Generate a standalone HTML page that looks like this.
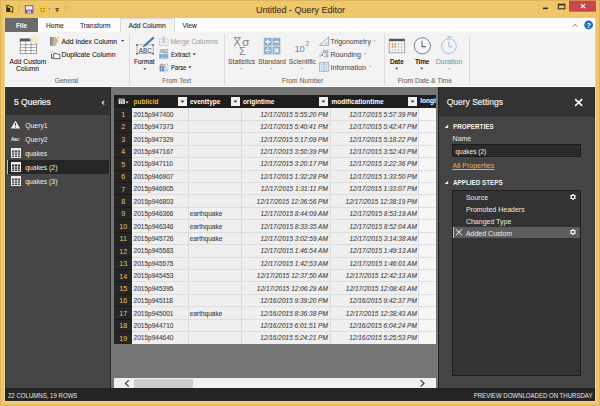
<!DOCTYPE html>
<html><head><meta charset="utf-8"><style>
html,body{margin:0;padding:0;}
body{width:600px;height:406px;position:relative;overflow:hidden;background:#EFC76A;font-family:"Liberation Sans", sans-serif;}
svg{overflow:visible}
</style></head><body>
<div style="position:absolute;left:0px;top:0px;width:600px;height:406px;border:1px solid #dcb55c;box-sizing:border-box"></div>
<div style="position:absolute;top:6.00px;font-size:9px;line-height:9px;color:#3d3522;white-space:nowrap;-webkit-text-stroke:0.1px #3d3522;left:256px;">Untitled - Query Editor</div>
<svg style="position:absolute;left:0;top:0" width="600" height="18">
<g>
<rect x="4.8" y="3.8" width="9.6" height="9.6" rx="2" fill="#f4d35a" opacity="0.7"/>
<path d="M6.2 5.6 L8.6 5.1 L9.6 6.4 L12.8 6.9 V12.3 L10.2 11.6 Z" fill="none" stroke="#2e2810" stroke-width="0.9"/>
<path d="M6.2 7.3 L10.2 8 V12 L6.2 12 Z" fill="#2e2810"/>
<rect x="18.5" y="5" width="0.8" height="7.5" fill="#d2ad55"/>
<rect x="25.4" y="5.7" width="7.4" height="7.3" fill="#f3ecf5" stroke="#7b5b8e" stroke-width="1"/>
<rect x="25.4" y="9.6" width="7.4" height="3.4" fill="#7b5b8e"/>
<rect x="27.6" y="10.6" width="3" height="2.4" fill="#f3ecf5"/>
<rect x="28.6" y="11.3" width="1" height="1" fill="#5a3a6a"/>
<circle cx="42.6" cy="9.9" r="3.9" fill="#f3d060" stroke="#f5c800" stroke-width="0.8"/>
<circle cx="41.1" cy="8.4" r="0.65" fill="#6a5500"/>
<circle cx="44.1" cy="8.4" r="0.65" fill="#6a5500"/>
<path d="M40.2 10.4 Q42.6 13.2 45 10.4" stroke="#6a5500" stroke-width="0.75" fill="none"/>
<path d="M48.3 8.2 L50.8 8.2 L49.55 9.4 Z" fill="#8a7a50"/>
<rect x="55.4" y="8.1" width="3.6" height="0.8" fill="#2a2410"/>
<path d="M55.4 9.8 L59 9.8 L57.2 11.7 Z" fill="#2a2410"/>
<rect x="65" y="5" width="0.8" height="7.5" fill="#d2ad55"/>
<rect x="542.8" y="7.6" width="5.2" height="1.5" fill="#2a2410"/>
<rect x="558.3" y="4.2" width="6.6" height="4.6" fill="none" stroke="#2a2410" stroke-width="1"/>
<rect x="558.3" y="4.2" width="6.6" height="1.2" fill="#2a2410"/>
<rect x="569" y="0.6" width="27" height="11.1" fill="#C9474C"/>
<path d="M581 4.2 L585 8.2 M585 4.2 L581 8.2" stroke="#fff" stroke-width="1.2"/>
</g></svg>
<div style="position:absolute;left:4px;top:17.5px;width:1px;height:383.5px;background:#f3d48a"></div>
<div style="position:absolute;left:595px;top:17.5px;width:1px;height:383.5px;background:#f3d48a"></div>
<div style="position:absolute;left:4px;top:401px;width:592px;height:1px;background:#f3d48a"></div>
<div style="position:absolute;left:5px;top:17.5px;width:590px;height:14.5px;background:#ffffff"></div>
<div style="position:absolute;left:5px;top:31.6px;width:590px;height:0.8px;background:#d8d8d8"></div>
<div style="position:absolute;left:5px;top:17.8px;width:33px;height:14.2px;background:#6b6b6b"></div>
<div style="position:absolute;top:23.00px;font-size:6.5px;line-height:6.5px;color:#ffffff;white-space:nowrap;font-weight:bold;left:-28.5px;width:100px;text-align:center;">File</div>
<div style="position:absolute;top:23.00px;font-size:6.6px;line-height:6.6px;color:#2e2e2e;white-space:nowrap;-webkit-text-stroke:0.1px #2e2e2e;left:46px;">Home</div>
<div style="position:absolute;top:23.00px;font-size:6.75px;line-height:6.75px;color:#2e2e2e;white-space:nowrap;-webkit-text-stroke:0.1px #2e2e2e;left:80px;">Transform</div>
<div style="position:absolute;left:120px;top:17.8px;width:54.5px;height:15px;background:#f3f3f3;border-left:0.8px solid #d8d8d8;border-right:0.8px solid #d8d8d8;border-top:0.8px solid #d8d8d8;box-sizing:border-box"></div>
<div style="position:absolute;top:23.00px;font-size:6.75px;line-height:6.75px;color:#2e2e2e;white-space:nowrap;-webkit-text-stroke:0.1px #2e2e2e;left:128.5px;">Add Column</div>
<div style="position:absolute;top:23.00px;font-size:6.7px;line-height:6.7px;color:#2e2e2e;white-space:nowrap;-webkit-text-stroke:0.1px #2e2e2e;left:182.5px;">View</div>
<svg style="position:absolute;left:560px;top:17px" width="40" height="16">
<path d="M12.8 9.6 L15 7.4 L17.2 9.6" stroke="#6b6b6b" stroke-width="1" fill="none"/>
<circle cx="28.6" cy="8" r="4.4" fill="#1f6fb5"/>
<text x="28.6" y="10.8" font-family="Liberation Sans" font-weight="bold" font-size="7.2" fill="#fff" text-anchor="middle">?</text>
</svg>
<div style="position:absolute;left:5px;top:32.3px;width:590px;height:53.5px;background:#f3f3f3"></div>
<div style="position:absolute;left:5px;top:85.5px;width:590px;height:1.5px;background:#fdfdfd"></div>
<div style="position:absolute;left:128.8px;top:34px;width:0.8px;height:51px;background:#dcdcdc"></div>
<div style="position:absolute;left:224px;top:34px;width:0.8px;height:51px;background:#dcdcdc"></div>
<div style="position:absolute;left:383.5px;top:34px;width:0.8px;height:51px;background:#dcdcdc"></div>
<div style="position:absolute;left:469px;top:34px;width:0.8px;height:51px;background:#dcdcdc"></div>
<div style="position:absolute;top:59.00px;font-size:6.7px;line-height:6.7px;color:#262626;white-space:nowrap;-webkit-text-stroke:0.1px #262626;left:9.6px;">Add Custom</div>
<div style="position:absolute;top:66.00px;font-size:6.7px;line-height:6.7px;color:#262626;white-space:nowrap;-webkit-text-stroke:0.1px #262626;left:16px;">Column</div>
<div style="position:absolute;top:39.00px;font-size:6.75px;line-height:6.75px;color:#262626;white-space:nowrap;-webkit-text-stroke:0.1px #262626;left:61.5px;">Add Index Column</div>
<div style="position:absolute;top:52.00px;font-size:6.85px;line-height:6.85px;color:#262626;white-space:nowrap;-webkit-text-stroke:0.1px #262626;left:61.5px;">Duplicate Column</div>
<div style="position:absolute;top:78.00px;font-size:6.6px;line-height:6.6px;color:#707070;white-space:nowrap;-webkit-text-stroke:0.1px #707070;left:16.5px;width:100px;text-align:center;">General</div>
<div style="position:absolute;top:59.00px;font-size:6.5px;line-height:6.5px;color:#262626;white-space:nowrap;-webkit-text-stroke:0.1px #262626;left:134px;">Format</div>
<div style="position:absolute;top:39.00px;font-size:6.75px;line-height:6.75px;color:#9a9a9a;white-space:nowrap;left:170.4px;">Merge Columns</div>
<div style="position:absolute;top:52.00px;font-size:6.6px;line-height:6.6px;color:#262626;white-space:nowrap;-webkit-text-stroke:0.1px #262626;left:170.6px;transform:scaleX(0.93);transform-origin:0 0;">Extract</div>
<div style="position:absolute;top:65.00px;font-size:6.6px;line-height:6.6px;color:#262626;white-space:nowrap;-webkit-text-stroke:0.1px #262626;left:170.6px;transform:scaleX(0.89);transform-origin:0 0;">Parse</div>
<div style="position:absolute;top:78.00px;font-size:6.5px;line-height:6.5px;color:#707070;white-space:nowrap;-webkit-text-stroke:0.1px #707070;left:126.69999999999999px;width:100px;text-align:center;">From Text</div>
<div style="position:absolute;top:59.00px;font-size:6.8px;line-height:6.8px;color:#505050;white-space:nowrap;-webkit-text-stroke:0.05px #505050;left:228px;">Statistics</div>
<div style="position:absolute;top:59.00px;font-size:6.9px;line-height:6.9px;color:#505050;white-space:nowrap;-webkit-text-stroke:0.05px #505050;left:257.9px;">Standard</div>
<div style="position:absolute;top:59.00px;font-size:6.8px;line-height:6.8px;color:#505050;white-space:nowrap;-webkit-text-stroke:0.05px #505050;left:288.8px;">Scientific</div>
<div style="position:absolute;top:39.00px;font-size:6.9px;line-height:6.9px;color:#4a4a4a;white-space:nowrap;-webkit-text-stroke:0.05px #4a4a4a;left:330.5px;">Trigonometry</div>
<div style="position:absolute;top:52.00px;font-size:7.1px;line-height:7.1px;color:#4a4a4a;white-space:nowrap;-webkit-text-stroke:0.05px #4a4a4a;left:330.5px;">Rounding</div>
<div style="position:absolute;top:65.00px;font-size:7.1px;line-height:7.1px;color:#4a4a4a;white-space:nowrap;-webkit-text-stroke:0.05px #4a4a4a;left:330.5px;">Information</div>
<div style="position:absolute;top:78.00px;font-size:6.7px;line-height:6.7px;color:#707070;white-space:nowrap;-webkit-text-stroke:0.1px #707070;left:252.7px;width:100px;text-align:center;">From Number</div>
<div style="position:absolute;top:59.00px;font-size:6.5px;line-height:6.5px;color:#222;white-space:nowrap;font-weight:bold;left:390px;letter-spacing:-0.1px;">Date</div>
<div style="position:absolute;top:59.00px;font-size:6.5px;line-height:6.5px;color:#222;white-space:nowrap;font-weight:bold;left:415px;letter-spacing:-0.25px;">Time</div>
<div style="position:absolute;top:59.00px;font-size:7.1px;line-height:7.1px;color:#8c8c8c;white-space:nowrap;-webkit-text-stroke:0.05px #8c8c8c;left:435.7px;">Duration</div>
<div style="position:absolute;top:78.00px;font-size:6.7px;line-height:6.7px;color:#707070;white-space:nowrap;-webkit-text-stroke:0.1px #707070;left:374.8px;width:100px;text-align:center;">From Date &amp; Time</div>
<svg style="position:absolute;left:0;top:32px" width="600" height="54">
<g transform="translate(0,-32)">
<!-- add custom column icon -->
<rect x="20.2" y="39" width="16.5" height="14.7" fill="#fff" stroke="#7a7a7a" stroke-width="0.7"/>
<rect x="19.9" y="38.7" width="10.8" height="2.7" fill="#595959"/>
<path d="M20 44.7 H36.8 M20 47.6 H36.8 M20 50.6 H36.8 M25.6 41.4 V53.9 M31.1 41.4 V53.9" stroke="#7a7a7a" stroke-width="0.65"/>
<circle cx="34.4" cy="39.9" r="3.6" fill="#f3f3f3"/>
<g stroke="#eadb9c" stroke-width="0.75"><path d="M34.4 35 V44.8 M29.5 39.9 H39.3 M30.9 36.4 L37.9 43.4 M37.9 36.4 L30.9 43.4"/></g>
<circle cx="34.4" cy="39.9" r="2" fill="#fbf5d8" stroke="#e8d78e" stroke-width="0.5"/>
<!-- add index icon -->
<defs><linearGradient id="gi" x1="0" x2="1"><stop offset="0" stop-color="#7d7d7d"/><stop offset="1" stop-color="#d0d0d0"/></linearGradient></defs>
<rect x="50" y="37" width="6.5" height="8.8" fill="url(#gi)"/>
<path d="M58.8 36.8 L54.6 41.6 L56.8 41.8 L53.8 46 L59 40.6 L56.9 40.4 L59.6 36.8 Z" fill="#eeae3c"/>
<!-- duplicate icon -->
<path d="M51.8 50.5 L52.5 52 L51.8 53.3 L51.1 52 Z" fill="#d9d08a"/>
<circle cx="51.8" cy="51.9" r="1.1" fill="#e0d890"/>
<path d="M51.6 54 V58.2 H53.5" stroke="#3a3a3a" stroke-width="0.9" fill="none"/>
<path d="M53.8 53.4 H56.6 L57.3 54.3 H59.8 V58.7 H53.8 Z" fill="#fff" stroke="#3a3a3a" stroke-width="0.8"/>
<!-- format icon -->
<rect x="137" y="44.9" width="16.1" height="8.8" fill="none" stroke="#8a8a8a" stroke-width="0.6"/>
<g fill="#3a3a3a"><rect x="136.3" y="44.2" width="1.4" height="1.4"/><rect x="152.4" y="44.2" width="1.4" height="1.4"/><rect x="136.3" y="53" width="1.4" height="1.4"/><rect x="152.4" y="53" width="1.4" height="1.4"/></g>
<text x="145.3" y="52.6" font-family="Liberation Sans" font-size="7.4" fill="#3a3a3a" text-anchor="middle" textLength="13" lengthAdjust="spacingAndGlyphs">ABC</text>
<path d="M153.8 37.4 L144.6 45.6" stroke="#4d7db5" stroke-width="2.1"/>
<path d="M144.6 45.6 L143.4 46.7" stroke="#2a2a2a" stroke-width="1.1"/>
<!-- merge columns icon (disabled) -->
<rect x="159.3" y="39.2" width="8.8" height="6.1" fill="#f0f3f7" stroke="#bcc6d2" stroke-width="0.7"/>
<rect x="162.3" y="36.4" width="2.6" height="6" fill="#c4cedb"/>
<path d="M161.2 42.4 H166.2" stroke="#c4cedb" stroke-width="1"/>
<!-- extract icon -->
<text x="163.7" y="53" font-family="Liberation Sans" font-size="4.6" fill="#6a6a6a" text-anchor="middle" textLength="8.6" lengthAdjust="spacingAndGlyphs">ABC</text>
<path d="M165.6 53.2 L168 49.5" stroke="#6a6a6a" stroke-width="0.5"/>
<rect x="159.2" y="53.8" width="9" height="4.8" fill="#6f9dd1"/>
<rect x="159.9" y="54.6" width="7.6" height="3.2" fill="none" stroke="#fff" stroke-width="0.45" stroke-dasharray="0.7 0.5"/>
<path d="M162.5 54.6 V57.8 M165 54.6 V57.8" stroke="#fff" stroke-width="0.45"/>
<!-- parse icon -->
<text x="162.8" y="66.6" font-family="Liberation Sans" font-size="4.8" fill="#6a6a6a" text-anchor="middle" textLength="6.6" lengthAdjust="spacingAndGlyphs">abc</text>
<path d="M166.5 63.2 L168.2 65.6" stroke="#6a6a6a" stroke-width="0.5"/>
<rect x="159.6" y="66.8" width="4.4" height="4.6" fill="#4f82bd"/>
<rect x="164" y="67.6" width="4.2" height="3.8" fill="#a8c4e4"/>
<path d="M159.6 69.1 H168.2 M161.8 66.8 V71.4 M166.1 67.6 V71.4" stroke="#fff" stroke-width="0.4"/>
<!-- statistics icon -->
<g fill="#74849a" font-family="Liberation Sans">
<text x="233.4" y="45.9" font-size="10.6" textLength="7.4" lengthAdjust="spacingAndGlyphs">X</text>
<text x="242" y="45.9" font-size="11" textLength="7.4" lengthAdjust="spacingAndGlyphs">σ</text>
<text x="239" y="54.6" font-size="10" textLength="6.8" lengthAdjust="spacingAndGlyphs">Σ</text>
</g>
<rect x="233.8" y="37" width="7" height="0.8" fill="#74849a"/>
<!-- standard icon -->
<g fill="#94aecf">
<rect x="263.8" y="37.8" width="7.9" height="7.9"/><rect x="272.5" y="37.8" width="7.9" height="7.9"/>
<rect x="263.8" y="46.5" width="7.9" height="7.9"/><rect x="272.5" y="46.5" width="7.9" height="7.9"/>
</g>
<g stroke="#fff" stroke-width="1.3">
<path d="M265.4 41.75 H270.1 M267.75 39.4 V44.1 M274.2 41.75 H278.8 M265.4 50.45 H270.1 M274.6 48.5 L278.4 52.3 M278.4 48.5 L274.6 52.3"/>
</g>
<g fill="#fff"><circle cx="267.75" cy="48.3" r="0.75"/><circle cx="267.75" cy="52.6" r="0.75"/></g>
<!-- scientific -->
<text x="294.4" y="51.5" font-family="Liberation Sans" font-size="9.4" fill="#74849a" textLength="10.4" lengthAdjust="spacingAndGlyphs">10</text>
<text x="305.6" y="45.6" font-family="Liberation Sans" font-size="6.4" fill="#74849a">2</text>
<!-- trig -->
<path d="M319.5 45.3 L328.7 37 L328.7 45.3 Z" fill="#f4f6fa" stroke="#8a9ab0" stroke-width="0.8"/>
<path d="M325.8 45.3 V42.8 H328.7" stroke="#8a9ab0" stroke-width="0.6" fill="none"/>
<!-- rounding -->
<g fill="#5d6470">
<rect x="321.6" y="52.6" width="0.9" height="0.9"/>
<rect x="319.6" y="56.5" width="0.9" height="0.9"/>
<rect x="324.2" y="56.5" width="0.9" height="0.9"/>
</g>
<g fill="none" stroke="#5d6470" stroke-width="0.6">
<ellipse cx="324.3" cy="51.7" rx="1" ry="1.5"/>
<ellipse cx="327" cy="51.7" rx="1" ry="1.5"/>
<ellipse cx="327" cy="55.8" rx="1" ry="1.5"/>
<path d="M319.3 55 H323 M322 54 L323 55 L322 56"/>
</g>
<!-- information -->
<rect x="319.6" y="62.5" width="9.1" height="8.8" fill="#dae6f2" stroke="#98aec6" stroke-width="0.8"/>
<path d="M324.1 62.5 V71.3" stroke="#98aec6" stroke-width="0.7"/>
<path d="M321 64.6 H322.8 M321 66.9 H322.8 M321 69.2 H322.8 M325.4 64.6 H327.3 M325.4 66.9 H327.3 M325.4 69.2 H327.3" stroke="#a9bcd2" stroke-width="0.7"/>
<!-- date icon -->
<rect x="389.2" y="39" width="15.5" height="13.8" fill="#fff" stroke="#888" stroke-width="0.7"/>
<rect x="389.2" y="39" width="15.5" height="2.2" fill="#555"/>
<path d="M389.2 44 H404.7 M389.2 47 H404.7 M389.2 50 H404.7 M392.3 41.2 V52.8 M395.4 41.2 V52.8 M398.5 41.2 V52.8 M401.6 41.2 V52.8" stroke="#b0b0b0" stroke-width="0.5"/>
<rect x="392.4" y="44.1" width="3" height="2.8" fill="none" stroke="#e89a48" stroke-width="0.8"/>
<!-- time icon -->
<circle cx="422.3" cy="45.8" r="8.1" fill="#f3f8fc" stroke="#6f6f6f" stroke-width="0.9"/>
<path d="M422 40.8 V46.6 H426" stroke="#6a6a6a" stroke-width="1.1" fill="none"/>
<!-- duration icon -->
<circle cx="449" cy="46.2" r="7.4" fill="#eef4fa" stroke="#aab8c8" stroke-width="0.9"/>
<path d="M447 36.6 H451 M449 36.6 V38.8" stroke="#aab8c8" stroke-width="0.9"/>
<path d="M448.8 41.6 V46.8 H452.4" stroke="#aab8c8" stroke-width="1" fill="none"/>
<!-- dropdown arrows -->
<g fill="#333">
<path d="M121 40.1 L124.2 40.1 L122.6 41.7 Z"/>
<path d="M143.3 68.3 L146.3 68.3 L144.8 69.8 Z"/>
<path d="M192.6 53.6 L195.9 53.6 L194.25 55.2 Z"/>
<path d="M188.3 66.6 L191.6 66.6 L189.95 68.2 Z"/>
<path d="M395.2 67.8 L398.2 67.8 L396.7 69.4 Z"/>
<path d="M420.2 67.8 L423.2 67.8 L421.7 69.4 Z"/>
</g>
<g fill="#a0a0a0">
<path d="M240 68 L242.4 68 L241.2 69.2 Z"/>
<path d="M270.3 68 L272.7 68 L271.5 69.2 Z"/>
<path d="M300.5 68 L302.9 68 L301.7 69.2 Z"/>
<path d="M373.4 40.6 L375.8 40.6 L374.6 41.8 Z"/>
<path d="M363.8 53.3 L366.2 53.3 L365 54.5 Z"/>
<path d="M369 65.7 L371.4 65.7 L370.2 66.9 Z"/>
<path d="M447.8 68 L450.2 68 L449 69.2 Z"/>
</g>
</g></svg>
<div style="position:absolute;left:5px;top:87px;width:105px;height:27.5px;background:#313131"></div>
<div style="position:absolute;left:5px;top:114.5px;width:105px;height:273.5px;background:#464646"></div>
<div style="position:absolute;left:110px;top:87px;width:1px;height:301px;background:#262626"></div>
<div style="position:absolute;top:98.00px;font-size:8.5px;line-height:8.5px;color:#f4f4f4;white-space:nowrap;-webkit-text-stroke:0.2px #f4f4f4;left:14px;">5 Queries</div>
<svg style="position:absolute;left:0;top:87px" width="111" height="120">
<g transform="translate(0,-87)">
<path d="M104.2 101 L102.2 102.8 L104.2 104.6" stroke="#e8e8e8" stroke-width="1.1" fill="none"/>
<path d="M15.5 120.8 L20.2 128.5 H10.8 Z" fill="#f2f2f2"/>
<rect x="15.1" y="123" width="0.9" height="3" fill="#333"/>
<rect x="15.1" y="126.8" width="0.9" height="0.9" fill="#333"/>
<text x="11" y="140.8" font-family="Liberation Sans" font-weight="bold" font-size="4.5" fill="#eee">A</text>
<text x="14.2" y="140.8" font-family="Liberation Sans" font-weight="bold" font-size="3.8" fill="#eee">BC</text>
</g></svg>
<div style="position:absolute;left:7px;top:160.3px;width:101.5px;height:13.3px;background:#262626"></div>
<div style="position:absolute;left:7px;top:160.3px;width:0.9px;height:13.3px;background:#e9bd5a"></div>
<svg style="position:absolute;left:10.5px;top:148px" width="10" height="10"><rect x="0.5" y="0.5" width="9" height="9" fill="none" stroke="#eee" stroke-width="1"/><rect x="0.5" y="0.5" width="9" height="2" fill="#eee"/><path d="M3.5 2.5 V9.5 M6.5 2.5 V9.5 M0.5 5 H9.5 M0.5 7.3 H9.5" stroke="#eee" stroke-width="0.8"/></svg>
<svg style="position:absolute;left:10.5px;top:162px" width="10" height="10"><rect x="0.5" y="0.5" width="9" height="9" fill="none" stroke="#eee" stroke-width="1"/><rect x="0.5" y="0.5" width="9" height="2" fill="#eee"/><path d="M3.5 2.5 V9.5 M6.5 2.5 V9.5 M0.5 5 H9.5 M0.5 7.3 H9.5" stroke="#eee" stroke-width="0.8"/></svg>
<svg style="position:absolute;left:10.5px;top:176.2px" width="10" height="10"><rect x="0.5" y="0.5" width="9" height="9" fill="none" stroke="#eee" stroke-width="1"/><rect x="0.5" y="0.5" width="9" height="2" fill="#eee"/><path d="M3.5 2.5 V9.5 M6.5 2.5 V9.5 M0.5 5 H9.5 M0.5 7.3 H9.5" stroke="#eee" stroke-width="0.8"/></svg>
<div style="position:absolute;top:123.00px;font-size:6.8px;line-height:6.8px;color:#efefef;white-space:nowrap;left:25.3px;">Query1</div>
<div style="position:absolute;top:137.00px;font-size:6.8px;line-height:6.8px;color:#efefef;white-space:nowrap;left:25.3px;">Query2</div>
<div style="position:absolute;top:151.00px;font-size:6.8px;line-height:6.8px;color:#efefef;white-space:nowrap;left:25.3px;">quakes</div>
<div style="position:absolute;top:165.00px;font-size:6.8px;line-height:6.8px;color:#efefef;white-space:nowrap;left:25.3px;">quakes (2)</div>
<div style="position:absolute;top:179.00px;font-size:6.8px;line-height:6.8px;color:#efefef;white-space:nowrap;left:25.3px;">quakes (3)</div>
<div style="position:absolute;left:5px;top:87px;width:1px;height:301px;background:#3c3c36"></div>
<div style="position:absolute;left:111px;top:87px;width:327px;height:301px;background:#757575"></div>
<div style="position:absolute;left:114px;top:95.3px;width:322px;height:12.5px;background:#1e1e1e"></div>
<div style="position:absolute;left:114px;top:107.8px;width:18px;height:236.16999999999996px;background:#262626"></div>
<div style="position:absolute;left:132px;top:107.8px;width:304px;height:236.16999999999996px;background:#efefef"></div>
<div style="position:absolute;left:418.6px;top:107.8px;width:17.399999999999977px;height:236.16999999999996px;background:#f6f6f6"></div>
<div style="position:absolute;left:114px;top:119.82999999999998px;width:18px;height:0.8px;background:#1a1a1a"></div>
<div style="position:absolute;left:132px;top:119.82999999999998px;width:304px;height:0.8px;background:#dedede"></div>
<div style="position:absolute;left:114px;top:132.26px;width:18px;height:0.8px;background:#1a1a1a"></div>
<div style="position:absolute;left:132px;top:132.26px;width:304px;height:0.8px;background:#dedede"></div>
<div style="position:absolute;left:114px;top:144.69px;width:18px;height:0.8px;background:#1a1a1a"></div>
<div style="position:absolute;left:132px;top:144.69px;width:304px;height:0.8px;background:#dedede"></div>
<div style="position:absolute;left:114px;top:157.11999999999998px;width:18px;height:0.8px;background:#1a1a1a"></div>
<div style="position:absolute;left:132px;top:157.11999999999998px;width:304px;height:0.8px;background:#dedede"></div>
<div style="position:absolute;left:114px;top:169.54999999999998px;width:18px;height:0.8px;background:#1a1a1a"></div>
<div style="position:absolute;left:132px;top:169.54999999999998px;width:304px;height:0.8px;background:#dedede"></div>
<div style="position:absolute;left:114px;top:181.98px;width:18px;height:0.8px;background:#1a1a1a"></div>
<div style="position:absolute;left:132px;top:181.98px;width:304px;height:0.8px;background:#dedede"></div>
<div style="position:absolute;left:114px;top:194.41px;width:18px;height:0.8px;background:#1a1a1a"></div>
<div style="position:absolute;left:132px;top:194.41px;width:304px;height:0.8px;background:#dedede"></div>
<div style="position:absolute;left:114px;top:206.84px;width:18px;height:0.8px;background:#1a1a1a"></div>
<div style="position:absolute;left:132px;top:206.84px;width:304px;height:0.8px;background:#dedede"></div>
<div style="position:absolute;left:114px;top:219.27px;width:18px;height:0.8px;background:#1a1a1a"></div>
<div style="position:absolute;left:132px;top:219.27px;width:304px;height:0.8px;background:#dedede"></div>
<div style="position:absolute;left:114px;top:231.7px;width:18px;height:0.8px;background:#1a1a1a"></div>
<div style="position:absolute;left:132px;top:231.7px;width:304px;height:0.8px;background:#dedede"></div>
<div style="position:absolute;left:114px;top:244.12999999999997px;width:18px;height:0.8px;background:#1a1a1a"></div>
<div style="position:absolute;left:132px;top:244.12999999999997px;width:304px;height:0.8px;background:#dedede"></div>
<div style="position:absolute;left:114px;top:256.56px;width:18px;height:0.8px;background:#1a1a1a"></div>
<div style="position:absolute;left:132px;top:256.56px;width:304px;height:0.8px;background:#dedede"></div>
<div style="position:absolute;left:114px;top:268.99px;width:18px;height:0.8px;background:#1a1a1a"></div>
<div style="position:absolute;left:132px;top:268.99px;width:304px;height:0.8px;background:#dedede"></div>
<div style="position:absolute;left:114px;top:281.42px;width:18px;height:0.8px;background:#1a1a1a"></div>
<div style="position:absolute;left:132px;top:281.42px;width:304px;height:0.8px;background:#dedede"></div>
<div style="position:absolute;left:114px;top:293.85px;width:18px;height:0.8px;background:#1a1a1a"></div>
<div style="position:absolute;left:132px;top:293.85px;width:304px;height:0.8px;background:#dedede"></div>
<div style="position:absolute;left:114px;top:306.28000000000003px;width:18px;height:0.8px;background:#1a1a1a"></div>
<div style="position:absolute;left:132px;top:306.28000000000003px;width:304px;height:0.8px;background:#dedede"></div>
<div style="position:absolute;left:114px;top:318.71000000000004px;width:18px;height:0.8px;background:#1a1a1a"></div>
<div style="position:absolute;left:132px;top:318.71000000000004px;width:304px;height:0.8px;background:#dedede"></div>
<div style="position:absolute;left:114px;top:331.14000000000004px;width:18px;height:0.8px;background:#1a1a1a"></div>
<div style="position:absolute;left:132px;top:331.14000000000004px;width:304px;height:0.8px;background:#dedede"></div>
<div style="position:absolute;left:188.0px;top:107.8px;width:0.8px;height:236.16999999999996px;background:#dcdcdc"></div>
<div style="position:absolute;left:240.9px;top:107.8px;width:0.8px;height:236.16999999999996px;background:#dcdcdc"></div>
<div style="position:absolute;left:329.6px;top:107.8px;width:0.8px;height:236.16999999999996px;background:#dcdcdc"></div>
<div style="position:absolute;left:418.20000000000005px;top:107.8px;width:0.8px;height:236.16999999999996px;background:#dcdcdc"></div>
<svg style="position:absolute;left:114px;top:95px" width="24" height="13">
<rect x="4.6" y="3.6" width="6.3" height="5.4" fill="#dcdcdc"/>
<rect x="4.6" y="3.4" width="6.3" height="1" fill="#4a6a6a"/>
<path d="M6.7 4.4 V9 M8.8 4.4 V9" stroke="#1e1e1e" stroke-width="0.5"/>
<path d="M11.4 6.4 L14.6 6.4 L13 8.4 Z" fill="#f0f0f0"/>
</svg>
<div style="position:absolute;top:99.00px;font-size:6.5px;line-height:6.5px;color:#e8b94c;white-space:nowrap;font-weight:bold;left:133.6px;">publicid</div>
<div style="position:absolute;left:177.70000000000002px;top:97px;width:9px;height:9px;background:#f2f2f2"></div>
<svg style="position:absolute;left:177.70000000000002px;top:97px" width="9" height="9"><path d="M2.3 3.5 L6.7 3.5 L4.5 6 Z" fill="#4a4a4a"/></svg>
<div style="position:absolute;top:99.00px;font-size:6.5px;line-height:6.5px;color:#ffffff;white-space:nowrap;font-weight:bold;left:190.0px;">eventtype</div>
<div style="position:absolute;left:230.60000000000002px;top:97px;width:9px;height:9px;background:#f2f2f2"></div>
<svg style="position:absolute;left:230.60000000000002px;top:97px" width="9" height="9"><path d="M2.3 3.5 L6.7 3.5 L4.5 6 Z" fill="#4a4a4a"/></svg>
<div style="position:absolute;top:99.00px;font-size:6.5px;line-height:6.5px;color:#ffffff;white-space:nowrap;font-weight:bold;left:242.9px;">origintime</div>
<div style="position:absolute;left:319.3px;top:97px;width:9px;height:9px;background:#f2f2f2"></div>
<svg style="position:absolute;left:319.3px;top:97px" width="9" height="9"><path d="M2.3 3.5 L6.7 3.5 L4.5 6 Z" fill="#4a4a4a"/></svg>
<div style="position:absolute;top:99.00px;font-size:6.5px;line-height:6.5px;color:#ffffff;white-space:nowrap;font-weight:bold;left:331.6px;">modificationtime</div>
<div style="position:absolute;left:407.90000000000003px;top:97px;width:9px;height:9px;background:#f2f2f2"></div>
<svg style="position:absolute;left:407.90000000000003px;top:97px" width="9" height="9"><path d="M2.3 3.5 L6.7 3.5 L4.5 6 Z" fill="#4a4a4a"/></svg>
<div style="position:absolute;left:420.2px;top:95.3px;width:15.8px;height:12.5px;overflow:hidden">
<div style="position:absolute;left:0;top:3.20px;font-size:6.5px;line-height:6.5px;font-weight:bold;color:#fff;white-space:nowrap">longitude</div></div>
<div style="position:absolute;top:111.00px;font-size:7.2px;line-height:7.2px;color:#e2c27c;white-space:nowrap;left:73.3px;width:100px;text-align:center;">1</div>
<div style="position:absolute;top:112.00px;font-size:6.5px;line-height:6.5px;color:#444444;white-space:nowrap;-webkit-text-stroke:0.1px #444444;left:133.6px;">2015p947400</div>
<div style="position:absolute;top:112.00px;font-size:6.5px;line-height:6.5px;color:#444444;white-space:nowrap;-webkit-text-stroke:0.1px #444444;font-style:italic;right:272.2px;">12/17/2015 5:55:20 PM</div>
<div style="position:absolute;top:112.00px;font-size:6.5px;line-height:6.5px;color:#444444;white-space:nowrap;-webkit-text-stroke:0.1px #444444;font-style:italic;right:183.2px;">12/17/2015 5:57:39 PM</div>
<div style="position:absolute;top:123.00px;font-size:7.2px;line-height:7.2px;color:#e2c27c;white-space:nowrap;left:73.3px;width:100px;text-align:center;">2</div>
<div style="position:absolute;top:124.00px;font-size:6.5px;line-height:6.5px;color:#444444;white-space:nowrap;-webkit-text-stroke:0.1px #444444;left:133.6px;">2015p947373</div>
<div style="position:absolute;top:124.00px;font-size:6.5px;line-height:6.5px;color:#444444;white-space:nowrap;-webkit-text-stroke:0.1px #444444;font-style:italic;right:272.2px;">12/17/2015 5:40:41 PM</div>
<div style="position:absolute;top:124.00px;font-size:6.5px;line-height:6.5px;color:#444444;white-space:nowrap;-webkit-text-stroke:0.1px #444444;font-style:italic;right:183.2px;">12/17/2015 5:42:47 PM</div>
<div style="position:absolute;top:136.00px;font-size:7.2px;line-height:7.2px;color:#e2c27c;white-space:nowrap;left:73.3px;width:100px;text-align:center;">3</div>
<div style="position:absolute;top:137.00px;font-size:6.5px;line-height:6.5px;color:#444444;white-space:nowrap;-webkit-text-stroke:0.1px #444444;left:133.6px;">2015p947329</div>
<div style="position:absolute;top:137.00px;font-size:6.5px;line-height:6.5px;color:#444444;white-space:nowrap;-webkit-text-stroke:0.1px #444444;font-style:italic;right:272.2px;">12/17/2015 5:17:09 PM</div>
<div style="position:absolute;top:137.00px;font-size:6.5px;line-height:6.5px;color:#444444;white-space:nowrap;-webkit-text-stroke:0.1px #444444;font-style:italic;right:183.2px;">12/17/2015 5:18:22 PM</div>
<div style="position:absolute;top:148.00px;font-size:7.2px;line-height:7.2px;color:#e2c27c;white-space:nowrap;left:73.3px;width:100px;text-align:center;">4</div>
<div style="position:absolute;top:149.00px;font-size:6.5px;line-height:6.5px;color:#444444;white-space:nowrap;-webkit-text-stroke:0.1px #444444;left:133.6px;">2015p947167</div>
<div style="position:absolute;top:149.00px;font-size:6.5px;line-height:6.5px;color:#444444;white-space:nowrap;-webkit-text-stroke:0.1px #444444;font-style:italic;right:272.2px;">12/17/2015 3:50:39 PM</div>
<div style="position:absolute;top:149.00px;font-size:6.5px;line-height:6.5px;color:#444444;white-space:nowrap;-webkit-text-stroke:0.1px #444444;font-style:italic;right:183.2px;">12/17/2015 3:52:43 PM</div>
<div style="position:absolute;top:161.00px;font-size:7.2px;line-height:7.2px;color:#e2c27c;white-space:nowrap;left:73.3px;width:100px;text-align:center;">5</div>
<div style="position:absolute;top:161.00px;font-size:6.5px;line-height:6.5px;color:#444444;white-space:nowrap;-webkit-text-stroke:0.1px #444444;left:133.6px;">2015p947110</div>
<div style="position:absolute;top:161.00px;font-size:6.5px;line-height:6.5px;color:#444444;white-space:nowrap;-webkit-text-stroke:0.1px #444444;font-style:italic;right:272.2px;">12/17/2015 3:20:17 PM</div>
<div style="position:absolute;top:161.00px;font-size:6.5px;line-height:6.5px;color:#444444;white-space:nowrap;-webkit-text-stroke:0.1px #444444;font-style:italic;right:183.2px;">12/17/2015 3:22:36 PM</div>
<div style="position:absolute;top:173.00px;font-size:7.2px;line-height:7.2px;color:#e2c27c;white-space:nowrap;left:73.3px;width:100px;text-align:center;">6</div>
<div style="position:absolute;top:174.00px;font-size:6.5px;line-height:6.5px;color:#444444;white-space:nowrap;-webkit-text-stroke:0.1px #444444;left:133.6px;">2015p946907</div>
<div style="position:absolute;top:174.00px;font-size:6.5px;line-height:6.5px;color:#444444;white-space:nowrap;-webkit-text-stroke:0.1px #444444;font-style:italic;right:272.2px;">12/17/2015 1:32:28 PM</div>
<div style="position:absolute;top:174.00px;font-size:6.5px;line-height:6.5px;color:#444444;white-space:nowrap;-webkit-text-stroke:0.1px #444444;font-style:italic;right:183.2px;">12/17/2015 1:33:50 PM</div>
<div style="position:absolute;top:186.00px;font-size:7.2px;line-height:7.2px;color:#e2c27c;white-space:nowrap;left:73.3px;width:100px;text-align:center;">7</div>
<div style="position:absolute;top:186.00px;font-size:6.5px;line-height:6.5px;color:#444444;white-space:nowrap;-webkit-text-stroke:0.1px #444444;left:133.6px;">2015p946905</div>
<div style="position:absolute;top:186.00px;font-size:6.5px;line-height:6.5px;color:#444444;white-space:nowrap;-webkit-text-stroke:0.1px #444444;font-style:italic;right:272.2px;">12/17/2015 1:31:11 PM</div>
<div style="position:absolute;top:186.00px;font-size:6.5px;line-height:6.5px;color:#444444;white-space:nowrap;-webkit-text-stroke:0.1px #444444;font-style:italic;right:183.2px;">12/17/2015 1:33:07 PM</div>
<div style="position:absolute;top:198.00px;font-size:7.2px;line-height:7.2px;color:#e2c27c;white-space:nowrap;left:73.3px;width:100px;text-align:center;">8</div>
<div style="position:absolute;top:199.00px;font-size:6.5px;line-height:6.5px;color:#444444;white-space:nowrap;-webkit-text-stroke:0.1px #444444;left:133.6px;">2015p946803</div>
<div style="position:absolute;top:199.00px;font-size:6.5px;line-height:6.5px;color:#444444;white-space:nowrap;-webkit-text-stroke:0.1px #444444;font-style:italic;right:272.2px;">12/17/2015 12:36:56 PM</div>
<div style="position:absolute;top:199.00px;font-size:6.5px;line-height:6.5px;color:#444444;white-space:nowrap;-webkit-text-stroke:0.1px #444444;font-style:italic;right:183.2px;">12/17/2015 12:38:19 PM</div>
<div style="position:absolute;top:210.00px;font-size:7.2px;line-height:7.2px;color:#e2c27c;white-space:nowrap;left:73.3px;width:100px;text-align:center;">9</div>
<div style="position:absolute;top:211.00px;font-size:6.5px;line-height:6.5px;color:#444444;white-space:nowrap;-webkit-text-stroke:0.1px #444444;left:133.6px;">2015p946366</div>
<div style="position:absolute;top:211.00px;font-size:6.5px;line-height:6.5px;color:#444444;white-space:nowrap;-webkit-text-stroke:0.1px #444444;left:189.8px;">earthquake</div>
<div style="position:absolute;top:211.00px;font-size:6.5px;line-height:6.5px;color:#444444;white-space:nowrap;-webkit-text-stroke:0.1px #444444;font-style:italic;right:272.2px;">12/17/2015 8:44:09 AM</div>
<div style="position:absolute;top:211.00px;font-size:6.5px;line-height:6.5px;color:#444444;white-space:nowrap;-webkit-text-stroke:0.1px #444444;font-style:italic;right:183.2px;">12/17/2015 8:53:19 AM</div>
<div style="position:absolute;top:223.00px;font-size:7.2px;line-height:7.2px;color:#e2c27c;white-space:nowrap;left:73.3px;width:100px;text-align:center;">10</div>
<div style="position:absolute;top:224.00px;font-size:6.5px;line-height:6.5px;color:#444444;white-space:nowrap;-webkit-text-stroke:0.1px #444444;left:133.6px;">2015p946346</div>
<div style="position:absolute;top:224.00px;font-size:6.5px;line-height:6.5px;color:#444444;white-space:nowrap;-webkit-text-stroke:0.1px #444444;left:189.8px;">earthquake</div>
<div style="position:absolute;top:224.00px;font-size:6.5px;line-height:6.5px;color:#444444;white-space:nowrap;-webkit-text-stroke:0.1px #444444;font-style:italic;right:272.2px;">12/17/2015 8:33:35 AM</div>
<div style="position:absolute;top:224.00px;font-size:6.5px;line-height:6.5px;color:#444444;white-space:nowrap;-webkit-text-stroke:0.1px #444444;font-style:italic;right:183.2px;">12/17/2015 8:52:04 AM</div>
<div style="position:absolute;top:235.00px;font-size:7.2px;line-height:7.2px;color:#e2c27c;white-space:nowrap;left:73.3px;width:100px;text-align:center;">11</div>
<div style="position:absolute;top:236.00px;font-size:6.5px;line-height:6.5px;color:#444444;white-space:nowrap;-webkit-text-stroke:0.1px #444444;left:133.6px;">2015p945726</div>
<div style="position:absolute;top:236.00px;font-size:6.5px;line-height:6.5px;color:#444444;white-space:nowrap;-webkit-text-stroke:0.1px #444444;left:189.8px;">earthquake</div>
<div style="position:absolute;top:236.00px;font-size:6.5px;line-height:6.5px;color:#444444;white-space:nowrap;-webkit-text-stroke:0.1px #444444;font-style:italic;right:272.2px;">12/17/2015 3:02:59 AM</div>
<div style="position:absolute;top:236.00px;font-size:6.5px;line-height:6.5px;color:#444444;white-space:nowrap;-webkit-text-stroke:0.1px #444444;font-style:italic;right:183.2px;">12/17/2015 3:14:38 AM</div>
<div style="position:absolute;top:248.00px;font-size:7.2px;line-height:7.2px;color:#e2c27c;white-space:nowrap;left:73.3px;width:100px;text-align:center;">12</div>
<div style="position:absolute;top:248.00px;font-size:6.5px;line-height:6.5px;color:#444444;white-space:nowrap;-webkit-text-stroke:0.1px #444444;left:133.6px;">2015p945583</div>
<div style="position:absolute;top:248.00px;font-size:6.5px;line-height:6.5px;color:#444444;white-space:nowrap;-webkit-text-stroke:0.1px #444444;font-style:italic;right:272.2px;">12/17/2015 1:46:54 AM</div>
<div style="position:absolute;top:248.00px;font-size:6.5px;line-height:6.5px;color:#444444;white-space:nowrap;-webkit-text-stroke:0.1px #444444;font-style:italic;right:183.2px;">12/17/2015 1:49:13 AM</div>
<div style="position:absolute;top:260.00px;font-size:7.2px;line-height:7.2px;color:#e2c27c;white-space:nowrap;left:73.3px;width:100px;text-align:center;">13</div>
<div style="position:absolute;top:261.00px;font-size:6.5px;line-height:6.5px;color:#444444;white-space:nowrap;-webkit-text-stroke:0.1px #444444;left:133.6px;">2015p945575</div>
<div style="position:absolute;top:261.00px;font-size:6.5px;line-height:6.5px;color:#444444;white-space:nowrap;-webkit-text-stroke:0.1px #444444;font-style:italic;right:272.2px;">12/17/2015 1:42:53 AM</div>
<div style="position:absolute;top:261.00px;font-size:6.5px;line-height:6.5px;color:#444444;white-space:nowrap;-webkit-text-stroke:0.1px #444444;font-style:italic;right:183.2px;">12/17/2015 1:46:01 AM</div>
<div style="position:absolute;top:273.00px;font-size:7.2px;line-height:7.2px;color:#e2c27c;white-space:nowrap;left:73.3px;width:100px;text-align:center;">14</div>
<div style="position:absolute;top:273.00px;font-size:6.5px;line-height:6.5px;color:#444444;white-space:nowrap;-webkit-text-stroke:0.1px #444444;left:133.6px;">2015p945453</div>
<div style="position:absolute;top:273.00px;font-size:6.5px;line-height:6.5px;color:#444444;white-space:nowrap;-webkit-text-stroke:0.1px #444444;font-style:italic;right:272.2px;">12/17/2015 12:37:50 AM</div>
<div style="position:absolute;top:273.00px;font-size:6.5px;line-height:6.5px;color:#444444;white-space:nowrap;-webkit-text-stroke:0.1px #444444;font-style:italic;right:183.2px;">12/17/2015 12:42:13 AM</div>
<div style="position:absolute;top:285.00px;font-size:7.2px;line-height:7.2px;color:#e2c27c;white-space:nowrap;left:73.3px;width:100px;text-align:center;">15</div>
<div style="position:absolute;top:286.00px;font-size:6.5px;line-height:6.5px;color:#444444;white-space:nowrap;-webkit-text-stroke:0.1px #444444;left:133.6px;">2015p945395</div>
<div style="position:absolute;top:286.00px;font-size:6.5px;line-height:6.5px;color:#444444;white-space:nowrap;-webkit-text-stroke:0.1px #444444;font-style:italic;right:272.2px;">12/17/2015 12:06:29 AM</div>
<div style="position:absolute;top:286.00px;font-size:6.5px;line-height:6.5px;color:#444444;white-space:nowrap;-webkit-text-stroke:0.1px #444444;font-style:italic;right:183.2px;">12/17/2015 12:08:43 AM</div>
<div style="position:absolute;top:297.00px;font-size:7.2px;line-height:7.2px;color:#e2c27c;white-space:nowrap;left:73.3px;width:100px;text-align:center;">16</div>
<div style="position:absolute;top:298.00px;font-size:6.5px;line-height:6.5px;color:#444444;white-space:nowrap;-webkit-text-stroke:0.1px #444444;left:133.6px;">2015p945118</div>
<div style="position:absolute;top:298.00px;font-size:6.5px;line-height:6.5px;color:#444444;white-space:nowrap;-webkit-text-stroke:0.1px #444444;font-style:italic;right:272.2px;">12/16/2015 9:39:20 PM</div>
<div style="position:absolute;top:298.00px;font-size:6.5px;line-height:6.5px;color:#444444;white-space:nowrap;-webkit-text-stroke:0.1px #444444;font-style:italic;right:183.2px;">12/16/2015 9:42:37 PM</div>
<div style="position:absolute;top:310.00px;font-size:7.2px;line-height:7.2px;color:#e2c27c;white-space:nowrap;left:73.3px;width:100px;text-align:center;">17</div>
<div style="position:absolute;top:311.00px;font-size:6.5px;line-height:6.5px;color:#444444;white-space:nowrap;-webkit-text-stroke:0.1px #444444;left:133.6px;">2015p945001</div>
<div style="position:absolute;top:311.00px;font-size:6.5px;line-height:6.5px;color:#444444;white-space:nowrap;-webkit-text-stroke:0.1px #444444;left:189.8px;">earthquake</div>
<div style="position:absolute;top:311.00px;font-size:6.5px;line-height:6.5px;color:#444444;white-space:nowrap;-webkit-text-stroke:0.1px #444444;font-style:italic;right:272.2px;">12/16/2015 8:36:38 PM</div>
<div style="position:absolute;top:311.00px;font-size:6.5px;line-height:6.5px;color:#444444;white-space:nowrap;-webkit-text-stroke:0.1px #444444;font-style:italic;right:183.2px;">12/17/2015 12:38:43 AM</div>
<div style="position:absolute;top:322.00px;font-size:7.2px;line-height:7.2px;color:#e2c27c;white-space:nowrap;left:73.3px;width:100px;text-align:center;">18</div>
<div style="position:absolute;top:323.00px;font-size:6.5px;line-height:6.5px;color:#444444;white-space:nowrap;-webkit-text-stroke:0.1px #444444;left:133.6px;">2015p944710</div>
<div style="position:absolute;top:323.00px;font-size:6.5px;line-height:6.5px;color:#444444;white-space:nowrap;-webkit-text-stroke:0.1px #444444;font-style:italic;right:272.2px;">12/16/2015 6:01:51 PM</div>
<div style="position:absolute;top:323.00px;font-size:6.5px;line-height:6.5px;color:#444444;white-space:nowrap;-webkit-text-stroke:0.1px #444444;font-style:italic;right:183.2px;">12/16/2015 6:04:24 PM</div>
<div style="position:absolute;top:335.00px;font-size:7.2px;line-height:7.2px;color:#e2c27c;white-space:nowrap;left:73.3px;width:100px;text-align:center;">19</div>
<div style="position:absolute;top:335.00px;font-size:6.5px;line-height:6.5px;color:#444444;white-space:nowrap;-webkit-text-stroke:0.1px #444444;left:133.6px;">2015p944640</div>
<div style="position:absolute;top:335.00px;font-size:6.5px;line-height:6.5px;color:#444444;white-space:nowrap;-webkit-text-stroke:0.1px #444444;font-style:italic;right:272.2px;">12/16/2015 5:24:21 PM</div>
<div style="position:absolute;top:335.00px;font-size:6.5px;line-height:6.5px;color:#444444;white-space:nowrap;-webkit-text-stroke:0.1px #444444;font-style:italic;right:183.2px;">12/16/2015 5:25:53 PM</div>
<div style="position:absolute;left:114px;top:377.8px;width:322px;height:10.2px;background:#f0f0f0"></div>
<div style="position:absolute;left:134px;top:379px;width:58.5px;height:8.5px;background:#cdcdcd"></div>
<svg style="position:absolute;left:114px;top:377px" width="322" height="11">
<path d="M14.8 3.2 L11.5 6.4 L14.8 9.6" stroke="#444" stroke-width="1.3" fill="none"/>
<path d="M306.6 3.2 L309.9 6.4 L306.6 9.6" stroke="#444" stroke-width="1.3" fill="none"/>
</svg>
<div style="position:absolute;left:438px;top:87px;width:1.2px;height:301px;background:#1f1f1f"></div>
<div style="position:absolute;left:439.2px;top:87px;width:155.8px;height:30.3px;background:#333333"></div>
<div style="position:absolute;left:439.2px;top:117.3px;width:155.8px;height:270.7px;background:#444444"></div>
<div style="position:absolute;top:98.00px;font-size:8.5px;line-height:8.5px;color:#f2f2f2;white-space:nowrap;-webkit-text-stroke:0.15px #f2f2f2;left:446.7px;">Query Settings</div>
<svg style="position:absolute;left:570px;top:95px" width="16" height="14">
<path d="M5.2 4.2 L12.2 10.8 M12.2 4.2 L5.2 10.8" stroke="#fff" stroke-width="1.6"/>
</svg>
<svg style="position:absolute;left:440px;top:120px" width="12" height="70">
<path d="M4.6 7.9 L8.1 7.9 L8.1 4.6 Z" fill="#eeeeee"/>
<path d="M4.6 64 L8.1 64 L8.1 60.7 Z" fill="#eeeeee"/>
</svg>
<div style="position:absolute;top:123.00px;font-size:7px;line-height:7px;color:#f4f4f4;white-space:nowrap;font-weight:bold;left:452.6px;transform:scaleX(0.9);transform-origin:0 0;">PROPERTIES</div>
<div style="position:absolute;top:135.00px;font-size:7px;line-height:7px;color:#e8e8e8;white-space:nowrap;left:452.6px;">Name</div>
<div style="position:absolute;left:451.8px;top:144.1px;width:129.2px;height:12.8px;background:#2b2b2b;border:0.8px solid #1c1c1c;box-sizing:border-box"></div>
<div style="position:absolute;top:149.00px;font-size:6.5px;line-height:6.5px;color:#eeeeee;white-space:nowrap;left:455.5px;">quakes (2)</div>
<div style="position:absolute;top:162.00px;font-size:7px;line-height:7px;color:#e2b244;white-space:nowrap;left:452.6px;text-decoration:underline;text-underline-offset:0.6px;">All Properties</div>
<div style="position:absolute;top:179.00px;font-size:7px;line-height:7px;color:#f4f4f4;white-space:nowrap;font-weight:bold;left:452.6px;transform:scaleX(0.9);transform-origin:0 0;">APPLIED STEPS</div>
<div style="position:absolute;left:451.8px;top:190.3px;width:129.2px;height:185.9px;background:#333333;border:0.8px solid #1e1e1e;box-sizing:border-box"></div>
<div style="position:absolute;left:452.6px;top:226.9px;width:127.6px;height:11.4px;background:#5d5d5d"></div>
<div style="position:absolute;left:452.6px;top:226.9px;width:1px;height:11.4px;background:#dcc46a"></div>
<div style="position:absolute;top:194.00px;font-size:7px;line-height:7px;color:#ececec;white-space:nowrap;left:465.9px;">Source</div>
<div style="position:absolute;top:206.00px;font-size:7px;line-height:7px;color:#ececec;white-space:nowrap;left:465.9px;">Promoted Headers</div>
<div style="position:absolute;top:218.00px;font-size:7px;line-height:7px;color:#ececec;white-space:nowrap;left:465.9px;">Changed Type</div>
<div style="position:absolute;top:230.00px;font-size:7px;line-height:7px;color:#ececec;white-space:nowrap;left:465.9px;">Added Custom</div>
<svg style="position:absolute;left:567.8px;top:192.1px" width="10" height="10"><g transform="translate(5,5)"><path d="M0.00 1.60 L0.00 3.10 M-1.39 0.80 L-2.68 1.55 M-1.39 -0.80 L-2.68 -1.55 M-0.00 -1.60 L-0.00 -3.10 M1.39 -0.80 L2.68 -1.55 M1.39 0.80 L2.68 1.55 " stroke="#f2f2f2" stroke-width="1.2"/><circle r="1.9" fill="none" stroke="#f2f2f2" stroke-width="1.1"/></g></svg>
<svg style="position:absolute;left:567.8px;top:227.2px" width="10" height="10"><g transform="translate(5,5)"><path d="M0.00 1.60 L0.00 3.10 M-1.39 0.80 L-2.68 1.55 M-1.39 -0.80 L-2.68 -1.55 M-0.00 -1.60 L-0.00 -3.10 M1.39 -0.80 L2.68 -1.55 M1.39 0.80 L2.68 1.55 " stroke="#f2f2f2" stroke-width="1.2"/><circle r="1.9" fill="none" stroke="#f2f2f2" stroke-width="1.1"/></g></svg>
<svg style="position:absolute;left:455px;top:228px" width="10" height="10"><path d="M0.9 1.3 L6.9 7.2 M6.9 1.3 L0.9 7.2" stroke="#f6f6f6" stroke-width="1"/></svg>
<div style="position:absolute;left:5px;top:388px;width:590px;height:13px;background:#242424"></div>
<div style="position:absolute;top:392.00px;font-size:7px;line-height:7px;color:#e6e6e6;white-space:nowrap;left:7.6px;transform:scaleX(0.866);transform-origin:0 0;">22 COLUMNS, 19 ROWS</div>
<div style="position:absolute;top:392.00px;font-size:7px;line-height:7px;color:#e6e6e6;white-space:nowrap;right:8px;transform:scaleX(0.864);transform-origin:100% 0;">PREVIEW DOWNLOADED ON THURSDAY</div>
</body></html>
